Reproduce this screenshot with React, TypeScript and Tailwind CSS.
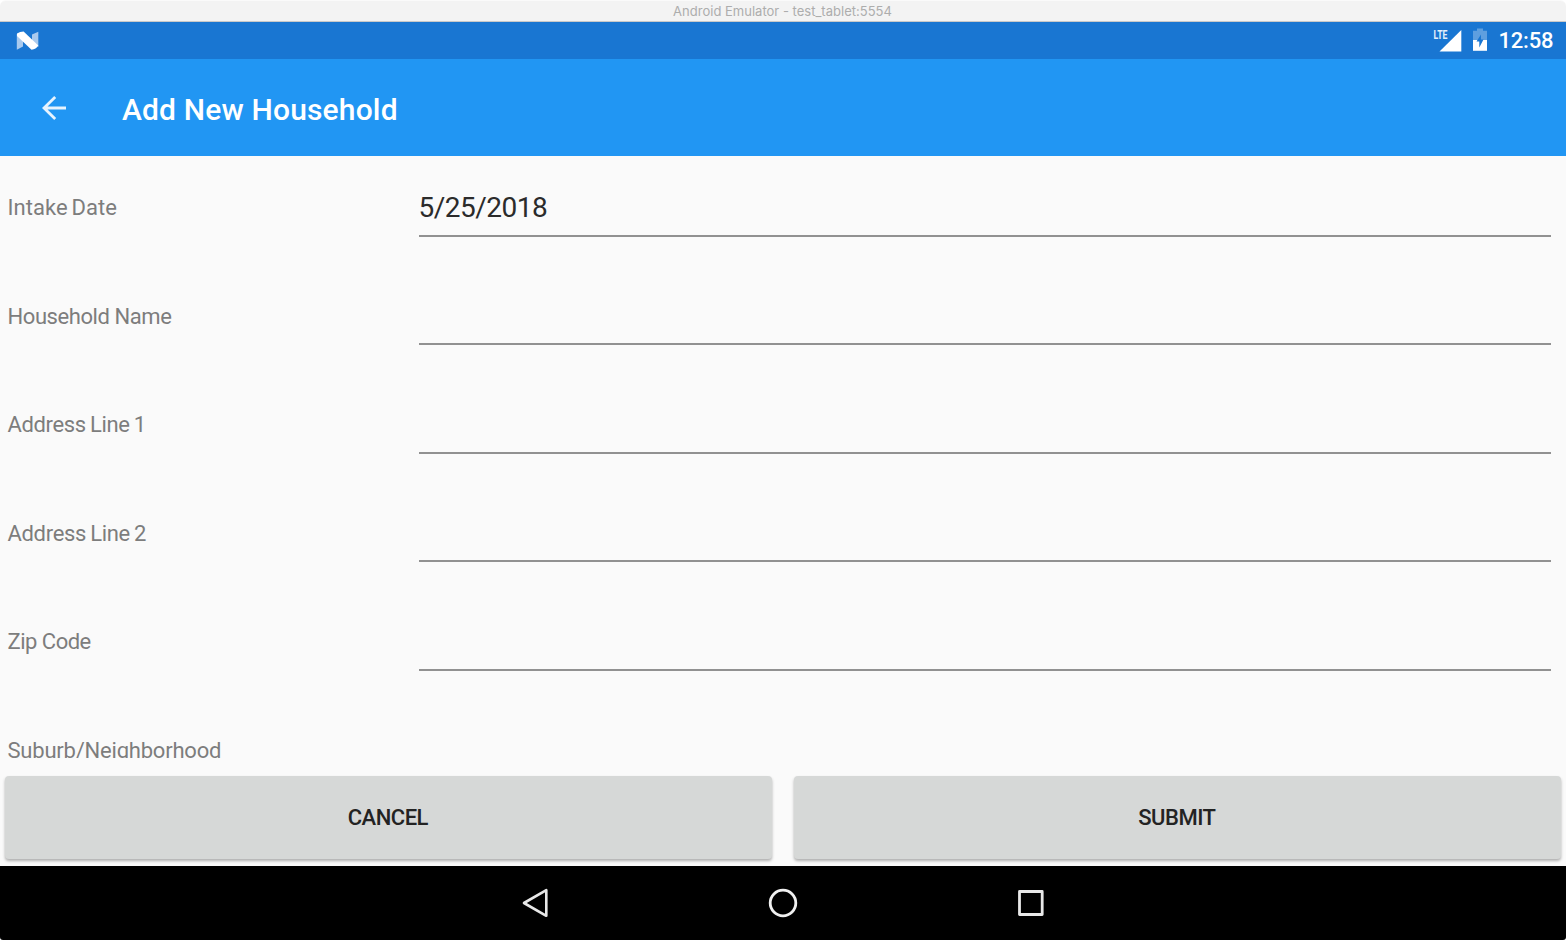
import React from "react";

type Field = { label: string; value?: string; tracking: string };

const fields: Field[] = [
  { label: "Intake Date", value: "5/25/2018", tracking: "[word-spacing:-1.5px] tracking-[0.03px]" },
  { label: "Household Name", tracking: "tracking-[-0.43px]" },
  { label: "Address Line 1", tracking: "[word-spacing:-1px] tracking-[-0.35px]" },
  { label: "Address Line 2", tracking: "[word-spacing:-1px] tracking-[-0.32px]" },
  { label: "Zip Code", tracking: "tracking-[-0.5px]" },
  { label: "Suburb/Neighborhood", tracking: "tracking-[-0.21px]" },
];

function WindowTitle() {
  return (
    <div className="flex h-[22px] shrink-0 items-center justify-center rounded-t-[6px] border-b border-t border-b-[#c9c9c9] border-t-[#fafafa] bg-[#f3f3f3] font-['Inter',sans-serif] text-[13px] leading-none text-[#adadad]">
      <span className="-ml-[1px] tracking-[0.01px]">Android Emulator - test_tablet:5554</span>
    </div>
  );
}

function StatusBar() {
  return (
    <div className="flex h-[37px] shrink-0 items-center justify-between bg-[#1976d2] pl-4 pr-3 text-white">
      <svg width="24" height="20" viewBox="0 0 24 20">
        <path d="M0.8 3 L7 8 V15.5 L0.8 18.8 Z" fill="#a9caee" />
        <path d="M16 3.5 L22.3 0.8 V16 L16 11 Z" fill="#a9caee" />
        <path d="M1 2.6 Q4 0.6 7.6 0.6 L22.3 14.6 Q20 18.6 15.5 18.8 L1 5 Z" fill="#fff" />
      </svg>
      <div className="flex items-center">
        <svg className="mr-[10px] overflow-visible" width="29" height="24" viewBox="0 0 29 24">
          <text x="0.5" y="10" textLength="14" lengthAdjust="spacingAndGlyphs" fontFamily="Roboto, sans-serif" fontSize="13" fontWeight="700" fill="#e3effb">LTE</text>
          <path d="M28.3 1 V22.5 H6.5 Z" fill="#fff" />
        </svg>
        <svg className="mr-[11px] overflow-visible" width="16" height="24" viewBox="0 0 16 24">
          <path d="M5 -0.5 H11 V1.7 H15 V11 H1 V1.7 H5 Z" fill="#5e9fdf" />
          <path d="M1 11 H15 V21.8 H1 Z" fill="#fff" />
          <path d="M9 5.5 L4.5 12.5 H7.3 V18.5 L11.5 10.5 H9 Z" fill="#1976d2" />
        </svg>
        <span className="w-[55.5px] whitespace-nowrap text-[22px] font-medium leading-none tracking-[-0.2px]">12:58</span>
      </div>
    </div>
  );
}

function AppBar() {
  return (
    <div className="flex h-[97px] shrink-0 items-center bg-[#2196f3] pl-[42px] text-white">
      <svg width="24" height="24" viewBox="0 0 24 24" fill="none" stroke="#e6f3fe" strokeWidth="2.8">
        <path d="M24 12 H2 M13.2 1 L2 12 L13.2 23" />
      </svg>
      <h1 className="ml-[56px] pt-[4px] text-[30px] font-medium leading-none tracking-[0.16px]">Add New Household</h1>
    </div>
  );
}

function FieldRow({ label, value, tracking }: Field) {
  return (
    <div className="flex h-[108.6px] shrink-0 pl-[7.5px] pr-[15.5px]">
      <div className={`w-[411px] pt-[41px] text-[22px] leading-[22px] text-[#7d7d7d] ${tracking}`}>{label}</div>
      <div className="h-[80.5px] flex-1 border-b-2 border-[#919191] pt-[37.5px] text-[28px] leading-[28px] tracking-[-0.5px] text-[#2b2b2b]">{value}</div>
    </div>
  );
}

function ActionButton({ children }: { children: React.ReactNode }) {
  return (
    <button className="h-[83px] flex-1 rounded-[4px] bg-[#d6d8d7] pr-px text-[22px] font-medium leading-none tracking-[-0.5px] text-[#232323] shadow-[0_2px_3px_rgba(0,0,0,0.3)]">
      {children}
    </button>
  );
}

function NavBar() {
  return (
    <div className="flex h-[74px] shrink-0 items-center justify-center gap-[218px] rounded-b-[3px] bg-black">
      <svg width="30" height="32" viewBox="0 0 30 32" fill="none" stroke="#e8e8e8" strokeWidth="2.6" strokeLinejoin="round">
        <path d="M4 16 L26.3 3.2 V28.8 Z" />
      </svg>
      <svg width="30" height="32" viewBox="0 0 30 32" fill="none" stroke="#f0f0f0" strokeWidth="2.8">
        <circle cx="15" cy="16" r="12.8" />
      </svg>
      <svg width="30" height="32" viewBox="0 0 30 32" fill="none" stroke="#e8e8e8" strokeWidth="2.8" strokeLinejoin="round">
        <rect x="3.5" y="4.5" width="22.7" height="23" />
      </svg>
    </div>
  );
}

export default function App() {
  return (
    <div className="flex h-[940px] w-[1566px] flex-col overflow-hidden bg-white font-['Roboto',sans-serif]">
      <WindowTitle />
      <StatusBar />
      <AppBar />
      <main className="flex h-[710px] shrink-0 flex-col bg-[#fafafa]">
        <div className="flex h-[602px] flex-col overflow-hidden">
          {fields.map((field) => (
            <FieldRow key={field.label} {...field} />
          ))}
        </div>
        <div className="mt-[18.4px] flex gap-[21.5px] pl-[4.6px] pr-[4.9px]">
          <ActionButton>CANCEL</ActionButton>
          <ActionButton>SUBMIT</ActionButton>
        </div>
      </main>
      <NavBar />
    </div>
  );
}
